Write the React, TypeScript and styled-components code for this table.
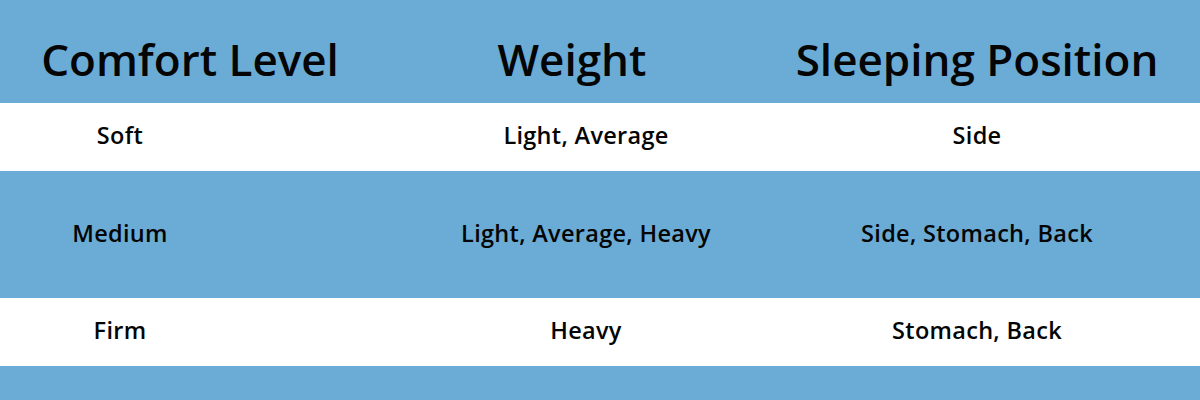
import React from "react";
import styled, { createGlobalStyle } from "styled-components";

const GlobalStyle = createGlobalStyle`
  html, body {
    margin: 0;
    padding: 0;
    background: #6aacd6;
  }
`;

const Page = styled.div`
  width: 1200px;
  height: 400px;
  background: #6aacd6;
  font-family: "Open Sans", "Noto Sans", sans-serif;
  color: #050505;
  overflow: hidden;
`;

const Row = styled.div<{ $cols: string; $height: number; $white?: boolean }>`
  display: grid;
  grid-template-columns: ${(p) => p.$cols};
  align-items: center;
  height: ${(p) => p.$height}px;
  background: ${(p) => (p.$white ? "#ffffff" : "transparent")};
`;

const HeaderRow = styled(Row)`
  align-items: start;
  padding-top: 37px;
  box-sizing: border-box;
`;

const HeadCell = styled.div`
  text-align: center;
  font-size: 44px;
  font-weight: 600;
  line-height: 1;
  white-space: nowrap;
`;

const Cell = styled.div<{ $inset?: number }>`
  text-align: center;
  font-size: 23.5px;
  font-weight: 600;
  letter-spacing: 0.3px;
  white-space: nowrap;
  padding-bottom: 4px;
  padding-right: ${(p) => p.$inset ?? 0}px;
`;

const headCols = "380px 384px 426px";
const bodyCols = "392px 388px 394px";

const rows = [
  { level: "Soft", weight: "Light, Average", position: "Side", white: true, height: 68 },
  { level: "Medium", weight: "Light, Average, Heavy", position: "Side, Stomach, Back", white: false, height: 127 },
  { level: "Firm", weight: "Heavy", position: "Stomach, Back", white: true, height: 68 },
];

const App = () => (
  <Page>
    <GlobalStyle />
    <HeaderRow $cols={headCols} $height={103}>
      <HeadCell>Comfort Level</HeadCell>
      <HeadCell>Weight</HeadCell>
      <HeadCell>Sleeping Position</HeadCell>
    </HeaderRow>
    {rows.map((r) => (
      <Row key={r.level} $cols={bodyCols} $height={r.height} $white={r.white}>
        <Cell $inset={152}>{r.level}</Cell>
        <Cell>{r.weight}</Cell>
        <Cell>{r.position}</Cell>
      </Row>
    ))}
  </Page>
);

export default App;
